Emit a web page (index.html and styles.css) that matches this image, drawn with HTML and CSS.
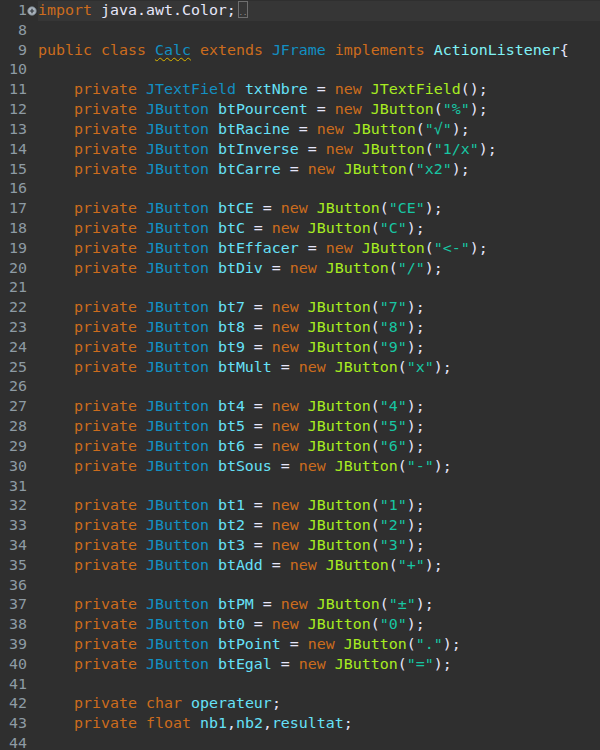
FILE: index.html
```html
<!DOCTYPE html>
<html>
<head>
<meta charset="utf-8">
<link rel="stylesheet" href="styles.css">
</head>
<body>
<div class="editor">
<div class="row current"><span class="ln">1</span><span class="fold"><svg width="10" height="10" viewBox="0 0 10 10"><circle cx="5" cy="5" r="4.3" fill="#a9b3bd" stroke="#6e7880" stroke-width="0.8"/><path d="M2.8 5H7.2M5 2.8V7.2" stroke="#2f3338" stroke-width="1.2"/></svg></span><span class="code"><span class="k">import</span> java.awt.Color;<span class="folded">..</span></span></div>
<div class="row"><span class="ln">8</span><span class="fold"></span><span class="code"></span></div>
<div class="row"><span class="ln">9</span><span class="fold"></span><span class="code"><span class="k">public</span> <span class="k">class</span> <span class="t warn">Calc</span> <span class="k">extends</span> <span class="t">JFrame</span> <span class="k">implements</span> <span class="i">ActionListener</span>{</span></div>
<div class="row"><span class="ln">10</span><span class="fold"></span><span class="code"></span></div>
<div class="row"><span class="ln">11</span><span class="fold"></span><span class="code">    <span class="k">private</span> <span class="t">JTextField</span> <span class="f">txtNbre</span> = <span class="k">new</span> <span class="m">JTextField</span>();</span></div>
<div class="row"><span class="ln">12</span><span class="fold"></span><span class="code">    <span class="k">private</span> <span class="t">JButton</span> <span class="f">btPourcent</span> = <span class="k">new</span> <span class="m">JButton</span>(<span class="s">"%"</span>);</span></div>
<div class="row"><span class="ln">13</span><span class="fold"></span><span class="code">    <span class="k">private</span> <span class="t">JButton</span> <span class="f">btRacine</span> = <span class="k">new</span> <span class="m">JButton</span>(<span class="s">"√"</span>);</span></div>
<div class="row"><span class="ln">14</span><span class="fold"></span><span class="code">    <span class="k">private</span> <span class="t">JButton</span> <span class="f">btInverse</span> = <span class="k">new</span> <span class="m">JButton</span>(<span class="s">"1/x"</span>);</span></div>
<div class="row"><span class="ln">15</span><span class="fold"></span><span class="code">    <span class="k">private</span> <span class="t">JButton</span> <span class="f">btCarre</span> = <span class="k">new</span> <span class="m">JButton</span>(<span class="s">"x2"</span>);</span></div>
<div class="row"><span class="ln">16</span><span class="fold"></span><span class="code"></span></div>
<div class="row"><span class="ln">17</span><span class="fold"></span><span class="code">    <span class="k">private</span> <span class="t">JButton</span> <span class="f">btCE</span> = <span class="k">new</span> <span class="m">JButton</span>(<span class="s">"CE"</span>);</span></div>
<div class="row"><span class="ln">18</span><span class="fold"></span><span class="code">    <span class="k">private</span> <span class="t">JButton</span> <span class="f">btC</span> = <span class="k">new</span> <span class="m">JButton</span>(<span class="s">"C"</span>);</span></div>
<div class="row"><span class="ln">19</span><span class="fold"></span><span class="code">    <span class="k">private</span> <span class="t">JButton</span> <span class="f">btEffacer</span> = <span class="k">new</span> <span class="m">JButton</span>(<span class="s">"&lt;-"</span>);</span></div>
<div class="row"><span class="ln">20</span><span class="fold"></span><span class="code">    <span class="k">private</span> <span class="t">JButton</span> <span class="f">btDiv</span> = <span class="k">new</span> <span class="m">JButton</span>(<span class="s">"/"</span>);</span></div>
<div class="row"><span class="ln">21</span><span class="fold"></span><span class="code"></span></div>
<div class="row"><span class="ln">22</span><span class="fold"></span><span class="code">    <span class="k">private</span> <span class="t">JButton</span> <span class="f">bt7</span> = <span class="k">new</span> <span class="m">JButton</span>(<span class="s">"7"</span>);</span></div>
<div class="row"><span class="ln">23</span><span class="fold"></span><span class="code">    <span class="k">private</span> <span class="t">JButton</span> <span class="f">bt8</span> = <span class="k">new</span> <span class="m">JButton</span>(<span class="s">"8"</span>);</span></div>
<div class="row"><span class="ln">24</span><span class="fold"></span><span class="code">    <span class="k">private</span> <span class="t">JButton</span> <span class="f">bt9</span> = <span class="k">new</span> <span class="m">JButton</span>(<span class="s">"9"</span>);</span></div>
<div class="row"><span class="ln">25</span><span class="fold"></span><span class="code">    <span class="k">private</span> <span class="t">JButton</span> <span class="f">btMult</span> = <span class="k">new</span> <span class="m">JButton</span>(<span class="s">"x"</span>);</span></div>
<div class="row"><span class="ln">26</span><span class="fold"></span><span class="code"></span></div>
<div class="row"><span class="ln">27</span><span class="fold"></span><span class="code">    <span class="k">private</span> <span class="t">JButton</span> <span class="f">bt4</span> = <span class="k">new</span> <span class="m">JButton</span>(<span class="s">"4"</span>);</span></div>
<div class="row"><span class="ln">28</span><span class="fold"></span><span class="code">    <span class="k">private</span> <span class="t">JButton</span> <span class="f">bt5</span> = <span class="k">new</span> <span class="m">JButton</span>(<span class="s">"5"</span>);</span></div>
<div class="row"><span class="ln">29</span><span class="fold"></span><span class="code">    <span class="k">private</span> <span class="t">JButton</span> <span class="f">bt6</span> = <span class="k">new</span> <span class="m">JButton</span>(<span class="s">"6"</span>);</span></div>
<div class="row"><span class="ln">30</span><span class="fold"></span><span class="code">    <span class="k">private</span> <span class="t">JButton</span> <span class="f">btSous</span> = <span class="k">new</span> <span class="m">JButton</span>(<span class="s">"-"</span>);</span></div>
<div class="row"><span class="ln">31</span><span class="fold"></span><span class="code"></span></div>
<div class="row"><span class="ln">32</span><span class="fold"></span><span class="code">    <span class="k">private</span> <span class="t">JButton</span> <span class="f">bt1</span> = <span class="k">new</span> <span class="m">JButton</span>(<span class="s">"1"</span>);</span></div>
<div class="row"><span class="ln">33</span><span class="fold"></span><span class="code">    <span class="k">private</span> <span class="t">JButton</span> <span class="f">bt2</span> = <span class="k">new</span> <span class="m">JButton</span>(<span class="s">"2"</span>);</span></div>
<div class="row"><span class="ln">34</span><span class="fold"></span><span class="code">    <span class="k">private</span> <span class="t">JButton</span> <span class="f">bt3</span> = <span class="k">new</span> <span class="m">JButton</span>(<span class="s">"3"</span>);</span></div>
<div class="row"><span class="ln">35</span><span class="fold"></span><span class="code">    <span class="k">private</span> <span class="t">JButton</span> <span class="f">btAdd</span> = <span class="k">new</span> <span class="m">JButton</span>(<span class="s">"+"</span>);</span></div>
<div class="row"><span class="ln">36</span><span class="fold"></span><span class="code"></span></div>
<div class="row"><span class="ln">37</span><span class="fold"></span><span class="code">    <span class="k">private</span> <span class="t">JButton</span> <span class="f">btPM</span> = <span class="k">new</span> <span class="m">JButton</span>(<span class="s">"±"</span>);</span></div>
<div class="row"><span class="ln">38</span><span class="fold"></span><span class="code">    <span class="k">private</span> <span class="t">JButton</span> <span class="f">bt0</span> = <span class="k">new</span> <span class="m">JButton</span>(<span class="s">"0"</span>);</span></div>
<div class="row"><span class="ln">39</span><span class="fold"></span><span class="code">    <span class="k">private</span> <span class="t">JButton</span> <span class="f">btPoint</span> = <span class="k">new</span> <span class="m">JButton</span>(<span class="s">"."</span>);</span></div>
<div class="row"><span class="ln">40</span><span class="fold"></span><span class="code">    <span class="k">private</span> <span class="t">JButton</span> <span class="f">btEgal</span> = <span class="k">new</span> <span class="m">JButton</span>(<span class="s">"="</span>);</span></div>
<div class="row"><span class="ln">41</span><span class="fold"></span><span class="code"></span></div>
<div class="row"><span class="ln">42</span><span class="fold"></span><span class="code">    <span class="k">private</span> <span class="k">char</span> <span class="f">operateur</span>;</span></div>
<div class="row"><span class="ln">43</span><span class="fold"></span><span class="code">    <span class="k">private</span> <span class="k">float</span> <span class="f">nb1</span>,<span class="f">nb2</span>,<span class="f">resultat</span>;</span></div>
<div class="row"><span class="ln">44</span><span class="fold"></span><span class="code"></span></div>
</div>
</body>
</html>
```
FILE: styles.css
```css
html, body {
  margin: 0;
  padding: 0;
  background: #2f2f2f;
  overflow: hidden;
}
.editor {
  font-family: "DejaVu Sans Mono", "Liberation Mono", monospace;
  font-size: 14.95px;
  color: #e6e6fa;
  width: 600px;
  height: 750px;
  padding-top: 1px;
  box-sizing: border-box;
}
.row {
  display: flex;
  height: 19.82px;
  line-height: 19.82px;
  white-space: pre;
}
.ln {
  width: 27px;
  text-align: right;
  color: #8e9ba4;
  flex: none;
}
.fold {
  width: 11px;
  flex: none;
  display: flex;
  align-items: center;
  justify-content: center;
}
.fold svg { display: block; margin-left: -1px; }
.code {
  flex: 1;
  min-width: 0;
}
.current .code { background: #363636; }
.k { color: #cc6c1d; }
.t { color: #1290c3; }
.i { color: #80f2f6; }
.f { color: #66e1f8; }
.m { color: #a7ec21; }
.s { color: #17c6a3; }
.warn {
  text-decoration: underline wavy #d8b400;
  text-decoration-thickness: 1px;
  text-underline-offset: 2px;
}
.folded {
  display: inline-block;
  width: 8px;
  height: 15px;
  margin-left: 2px;
  border: 1px solid #6f6f6f;
  vertical-align: -3px;
  font-size: 7px;
  line-height: 22px;
  color: #9a9a9a;
  text-align: center;
  overflow: hidden;
}
```
